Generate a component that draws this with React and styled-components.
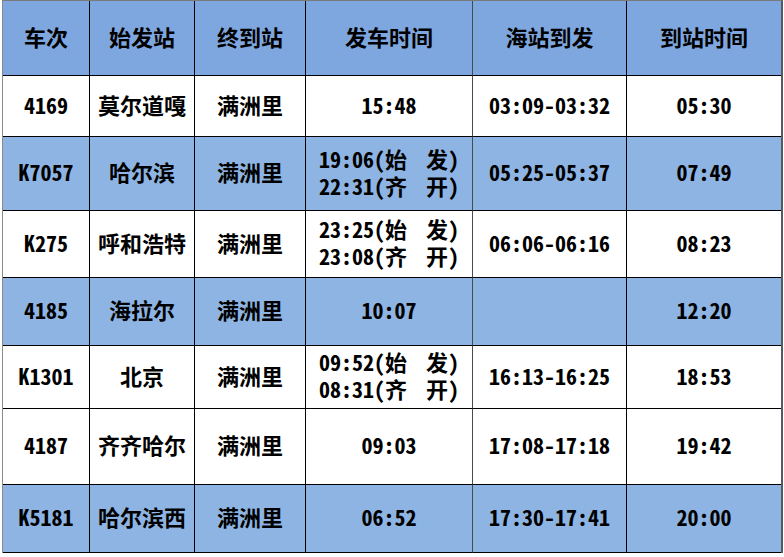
import React from "react";
import styled, { createGlobalStyle } from "styled-components";

const Global = createGlobalStyle`
  html, body { margin: 0; padding: 0; background: #ffffff; }
  body { font-family: "Noto Sans CJK SC", "Noto Sans", sans-serif; }
`;

const Page = styled.div`
  padding-left: 2px;
  width: 784px;
  height: 557px;
  box-sizing: border-box;
`;

const Table = styled.div`
  display: grid;
  grid-template-columns: 87px 105px 111px 167px 154px 154px;
  width: max-content;
  border-top: 1px solid #7a7a7a;
  border-left: 1px solid #8a8a8a;
  border-right: 2px solid #555a60;
`;

const Cell = styled.div`
  height: ${(p) => p.$h}px;
  box-sizing: border-box;
  padding-bottom: 4px;
  background: ${(p) => (p.$head ? "#7ea7df" : p.$blue ? "#8eb4e3" : "#ffffff")};
  border-bottom: 1px solid #000000;
  border-right: ${(p) => (p.$last ? "none" : `1px solid ${p.$grayLine ? "#4a4a4a" : "#000000"}`)};
  display: flex;
  flex-direction: column;
  align-items: center;
  justify-content: center;
  color: #000000;
  font-size: 22px;
  font-weight: 700;
  line-height: 27px;
  font-feature-settings: "hwid";
  white-space: nowrap;
`;

const TimeLine = styled.div`
  display: flex;
  justify-content: space-between;
  width: 140px;
  height: 27px;
`;

const headers = ["车次", "始发站", "终到站", "发车时间", "海站到发", "到站时间"];

const rows = [
  { h: 61, blue: false, c: ["4169", "莫尔道嘎", "满洲里", "15:48", "03:09-03:32", "05:30"] },
  { h: 74, blue: true, c: ["K7057", "哈尔滨", "满洲里", [["19:06(始", "发)"], ["22:31(齐", "开)"]], "05:25-05:37", "07:49"] },
  { h: 67, blue: false, c: ["K275", "呼和浩特", "满洲里", [["23:25(始", "发)"], ["23:08(齐", "开)"]], "06:06-06:16", "08:23"] },
  { h: 68, blue: true, c: ["4185", "海拉尔", "满洲里", "10:07", "", "12:20"] },
  { h: 63, blue: false, c: ["K1301", "北京", "满洲里", [["09:52(始", "发)"], ["08:31(齐", "开)"]], "16:13-16:25", "18:53"] },
  { h: 76, blue: false, c: ["4187", "齐齐哈尔", "满洲里", "09:03", "17:08-17:18", "19:42"] },
  { h: 68, blue: true, c: ["K5181", "哈尔滨西", "满洲里", "06:52", "17:30-17:41", "20:00"] },
];

function Content({ v }) {
  if (Array.isArray(v)) {
    return v.map((line, i) => (
      <TimeLine key={i}>
        <span>{line[0]}</span>
        <span>{line[1]}</span>
      </TimeLine>
    ));
  }
  return v;
}

export default function App() {
  return (
    <Page>
      <Global />
      <Table>
        {headers.map((h, i) => (
          <Cell key={h} $h={75} $head $last={i === 5} $grayLine={i === 3}>
            {h}
          </Cell>
        ))}
        {rows.map((r, ri) =>
          r.c.map((v, ci) => (
            <Cell
              key={`${ri}-${ci}`}
              $h={r.h}
              $blue={r.blue}
              $last={ci === 5}
              $grayLine={ci === 3}
            >
              <Content v={v} />
            </Cell>
          ))
        )}
      </Table>
    </Page>
  );
}
